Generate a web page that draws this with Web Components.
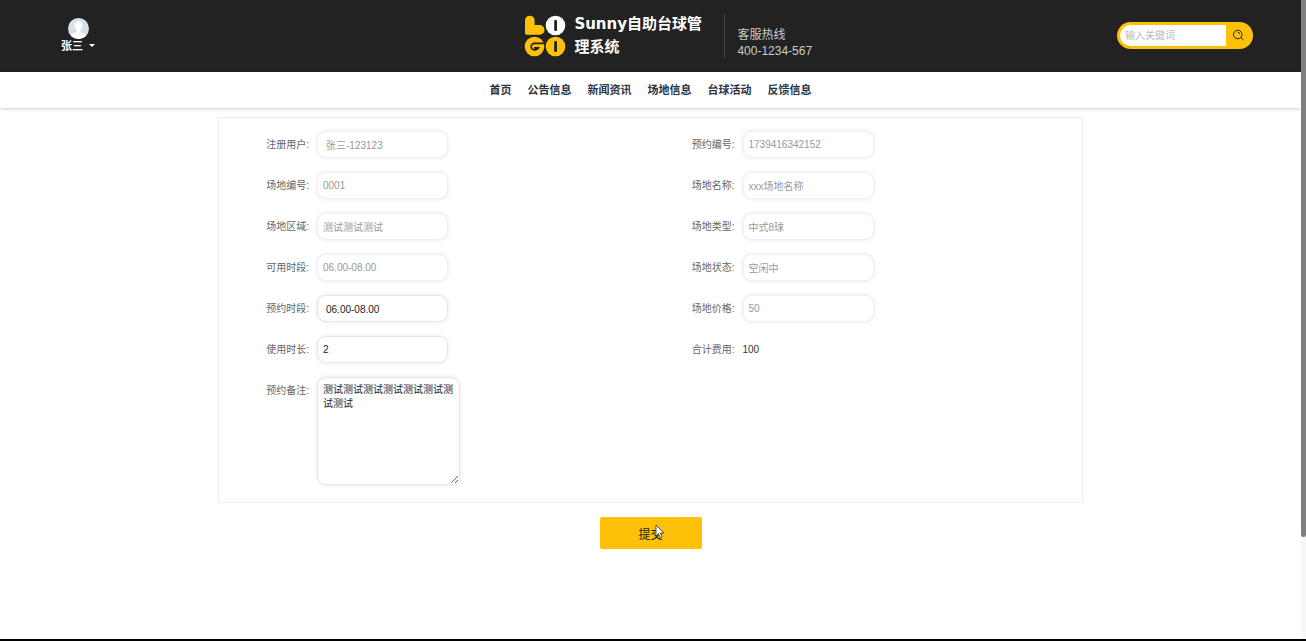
<!DOCTYPE html>
<html lang="zh-CN">
<head>
<meta charset="UTF-8">
<title>Sunny自助台球管理系统</title>
<style>
    html, body {
        margin: 0;
        height: 100%;
    }

    body {
        background: #fff;
        color: #333;
        font-family: "Liberation Sans", "Noto Sans CJK SC", sans-serif;
        font-size: 10px;
        overflow: hidden;
    }
</style>
</head>
<body>
<app-shell>
    <site-header slot="top" heading="Sunny自助台球管理系统" phone="400-1234-567" user="张三"></site-header>
    <site-nav slot="top">
        <a href="#home">首页</a>
        <a href="#notice">公告信息</a>
        <a href="#news">新闻资讯</a>
        <a href="#venue">场地信息</a>
        <a href="#activity">台球活动</a>
        <a href="#feedback">反馈信息</a>
    </site-nav>
    <booking-form>
        <form-field label="注册用户" type="select" value="张三-123123" disabled></form-field>
        <form-field label="预约编号" value="1739416342152" disabled></form-field>
        <form-field label="场地编号" value="0001" disabled></form-field>
        <form-field label="场地名称" value="xxx场地名称" disabled></form-field>
        <form-field label="场地区域" value="测试测试测试" disabled></form-field>
        <form-field label="场地类型" value="中式8球" disabled></form-field>
        <form-field label="可用时段" value="06.00-08.00" disabled></form-field>
        <form-field label="场地状态" value="空闲中" disabled></form-field>
        <form-field label="预约时段" type="select" value="06.00-08.00"></form-field>
        <form-field label="场地价格" value="50" disabled></form-field>
        <form-field label="使用时长" value="2"></form-field>
        <form-field label="合计费用" type="output" value="100"></form-field>
        <form-field label="预约备注" type="textarea" value="测试测试测试测试测试测试测试测试"></form-field>
    </booking-form>
</app-shell>

<script>
    // Marco general: contenido a la izquierda, barra de desplazamiento a la derecha
    class AppShell extends HTMLElement {
        constructor() {
            super();
            this.attachShadow({ mode: 'open' });
            this.shadowRoot.innerHTML = `
                <style>
                    :host {
                        display: flex;
                        height: 100vh;
                        box-sizing: border-box;
                        border-bottom: 2px solid #000;
                    }

                    main {
                        flex: 1;
                        min-width: 0;
                    }

                    .rail {
                        width: 5px;
                        background: #f8f8f8;
                    }

                    .thumb {
                        height: 84%;
                        background: #7f7f7f;
                        border-radius: 0 0 3px 3px;
                    }
                </style>
                <main>
                    <slot name="top"></slot>
                    <slot></slot>
                </main>
                <div class="rail"><div class="thumb"></div></div>
            `;
        }
    }

    class SiteHeader extends HTMLElement {
        constructor() {
            super();
            this.attachShadow({ mode: 'open' });
            this.render();
        }

        render() {
            this.shadowRoot.innerHTML = `
                <style>
                    :host {
                        display: block;
                        background: #222;
                        color: #fff;
                    }

                    header {
                        display: grid;
                        grid-template-columns: 40% auto 1fr;
                        align-items: center;
                        height: 72px;
                    }

                    /* Usuario */
                    .user {
                        display: flex;
                        flex-direction: column;
                        align-items: center;
                        justify-self: start;
                        margin-left: 61px;
                        padding: 0 0 2px;
                        border: 0;
                        background: none;
                        color: #fff;
                        font: inherit;
                    }

                    .user .name {
                        display: flex;
                        align-items: center;
                        gap: 6px;
                        font-size: 11px;
                        font-weight: bold;
                        line-height: 14px;
                    }

                    .caret {
                        border: 3px solid transparent;
                        border-top-color: #fff;
                        border-bottom: 0;
                    }

                    /* Logo y título */
                    .brand {
                        display: flex;
                        align-items: center;
                        padding-left: 4px;
                    }

                    h1 {
                        width: 130px;
                        margin: 0 20px 0 8px;
                        font-family: "DejaVu Sans", "Noto Sans CJK SC", sans-serif;
                        font-size: 15px;
                        font-weight: bold;
                        line-height: 23px;
                    }

                    .hotline {
                        height: 44px;
                        box-sizing: border-box;
                        padding: 13px 0 0 12px;
                        border-left: 1px solid #444;
                        color: #ccc;
                        font-size: 12px;
                        line-height: 16px;
                    }

                    .hotline p {
                        margin: 0;
                    }

                    /* Buscador */
                    .search {
                        display: flex;
                        justify-self: end;
                        width: 136px;
                        height: 27px;
                        box-sizing: border-box;
                        margin: 0 48px 2px 0;
                        padding: 3px;
                        border-radius: 14px;
                        background: #ffc107;
                    }

                    .search input {
                        width: 106px;
                        box-sizing: border-box;
                        padding: 0 5px;
                        border: 0;
                        border-radius: 11px 0 0 11px;
                        font: inherit;
                    }

                    .search input::placeholder {
                        color: #bbb;
                    }

                    .search button {
                        display: grid;
                        place-items: center;
                        flex: 1;
                        padding: 0;
                        border: 0;
                        background: none;
                    }
                </style>

                <header>
                    <button class="user" type="button">
                        <svg width="21" height="21" viewBox="0 0 21 21" aria-hidden="true">
                            <clipPath id="round"><circle cx="10.5" cy="10.5" r="10.5"/></clipPath>
                            <g clip-path="url(#round)">
                                <rect width="21" height="21" fill="#d9deec"/>
                                <path fill="#fff" d="M10.5 3C7.900 3 6.500 4.800 6.700 7.500c.2 2 .9 3.600 2 4.500v2C6.700 15.200 3 15.200 2 19v2h17v-2c-1-3.800-4.700-3.800-6.700-5v-2c1.100-.9 1.800-2.500 2-4.500C14.500 4.800 13.100 3 10.500 3z"/>
                            </g>
                        </svg>
                        <span class="name">${this.getAttribute('user')}<i class="caret"></i></span>
                    </button>

                    <div class="brand">
                        <svg width="42" height="42" viewBox="0 0 42 42" aria-hidden="true">
                            <path fill="#ffc107" d="M1 5.500a4.800 4.800 0 0 1 9.600 0v4.500h5a4.900 4.900 0 0 1 0 9.800H2.500a1.500 1.500 0 0 1-1.500-1.500z"/>
                            <circle cx="31.500" cy="10.500" r="9.800" fill="#fff"/>
                            <rect x="30.200" y="5" width="2.800" height="11" rx="1" fill="#222"/>
                            <circle cx="10.500" cy="31.500" r="9.800" fill="#ffc107"/>
                            <path fill="none" stroke="#222" stroke-width="1.700" d="M20.500 28.400H10.500a3.200 3.200 0 1 0 1 6.200c1.300 0 2.400-.6 3-1.800H10"/>
                            <circle cx="31.500" cy="31.500" r="9.800" fill="#ffc107"/>
                            <rect x="30.200" y="26" width="2.800" height="11" rx="1" fill="#222"/>
                        </svg>
                        <h1>${this.getAttribute('heading')}</h1>
                        <div class="hotline">
                            <p>客服热线</p>
                            <p>${this.getAttribute('phone')}</p>
                        </div>
                    </div>

                    <form class="search">
                        <input type="text" placeholder="输入关键词" aria-label="输入关键词">
                        <button type="button" aria-label="搜索">
                            <svg width="12" height="12" viewBox="0 0 12 12" fill="none" stroke="#222" aria-hidden="true">
                                <circle cx="5.800" cy="5.500" r="4.300"/>
                                <path d="M8.900 8.600l2.400 2.200M5.800 3.200a2.300 2.300 0 0 1 2 2"/>
                            </svg>
                        </button>
                    </form>
                </header>
            `;
        }
    }

    class SiteNav extends HTMLElement {
        constructor() {
            super();
            this.attachShadow({ mode: 'open' });
            this.shadowRoot.innerHTML = `
                <style>
                    :host {
                        display: block;
                        background: #fff;
                        box-shadow: 0 1px 3px rgba(0, 0, 0, 0.2);
                    }

                    nav {
                        display: flex;
                        justify-content: center;
                        gap: 16px;
                        line-height: 36px;
                    }

                    ::slotted(a) {
                        color: #2c3442;
                        font-size: 11px;
                        font-weight: bold;
                        text-decoration: none;
                    }
                </style>
                <nav><slot></slot></nav>
            `;
        }
    }

    class FormField extends HTMLElement {
        constructor() {
            super();
            this.attachShadow({ mode: 'open' });
            this.render();
        }

        // Devuelve el control según el tipo de campo
        control() {
            const value = this.getAttribute('value');
            const disabled = this.hasAttribute('disabled') ? 'disabled' : '';

            switch (this.getAttribute('type')) {
                case 'select':
                    return `<select id="control" ${disabled}><option>${value}</option></select>`;
                case 'textarea':
                    return `<textarea id="control">${value}</textarea>`;
                case 'output':
                    return `<output id="control">${value}</output>`;
                default:
                    return `<input id="control" type="text" value="${value}" ${disabled}>`;
            }
        }

        render() {
            this.shadowRoot.innerHTML = `
                <style>
                    :host {
                        display: flex;
                        align-items: flex-start;
                        gap: 8px;
                    }

                    label {
                        width: 84px;
                        color: #666;
                        line-height: 27px;
                        text-align: right;
                    }

                    input, select, textarea {
                        box-sizing: border-box;
                        width: 131px;
                        height: 27px;
                        margin: 0;
                        padding: 0 5px;
                        border: 1px solid #e3e8ee;
                        border-radius: 9px;
                        background: #fff;
                        box-shadow: 0 0 4px rgba(0, 0, 0, 0.1);
                        color: #222;
                        font: inherit;
                    }

                    select {
                        appearance: none;
                        padding: 2px 8px 0;
                        opacity: 1;
                    }

                    textarea {
                        width: 143px;
                        height: 108px;
                        padding: 5px;
                        line-height: 14px;
                    }

                    :disabled {
                        border-color: #edf0f4;
                        color: #999;
                    }

                    output {
                        line-height: 27px;
                    }
                </style>
                <label for="control">${this.getAttribute('label')}:</label>
                ${this.control()}
            `;
        }
    }

    class BookingForm extends HTMLElement {
        constructor() {
            super();
            this.attachShadow({ mode: 'open' });
            this.shadowRoot.innerHTML = `
                <style>
                    :host {
                        display: block;
                        padding: 9px 16px;
                    }

                    form {
                        display: flex;
                        flex-direction: column;
                        align-items: center;
                        gap: 14px;
                    }

                    .fields {
                        display: grid;
                        grid-template-columns: 1fr 1fr;
                        gap: 14px 0;
                        box-sizing: border-box;
                        width: 100%;
                        max-width: 865px;
                        padding: 13px 6px 17px;
                        border: 1px solid #eee;
                    }

                    button {
                        position: relative;
                        width: 102px;
                        height: 32px;
                        border: 0;
                        border-radius: 2px;
                        background: #ffc107;
                        color: #222;
                        font: inherit;
                        font-size: 12px;
                    }

                    /* Puntero sobre el botón */
                    .pointer {
                        position: absolute;
                        left: 55px;
                        top: 7px;
                    }
                </style>
                <form>
                    <div class="fields"><slot></slot></div>
                    <button type="button">提交<svg class="pointer" width="10" height="15" viewBox="0 0 10 15" aria-hidden="true">
                        <path fill="#fff" stroke="#333" stroke-width=".8" d="M1 1v11l2.500-2.300L5.200 13.600l1.900-.8-1.700-3.800H9z"/>
                    </svg></button>
                </form>
            `;
        }
    }

    customElements.define('app-shell', AppShell);
    customElements.define('site-header', SiteHeader);
    customElements.define('site-nav', SiteNav);
    customElements.define('form-field', FormField);
    customElements.define('booking-form', BookingForm);
</script>
</body>
</html>
